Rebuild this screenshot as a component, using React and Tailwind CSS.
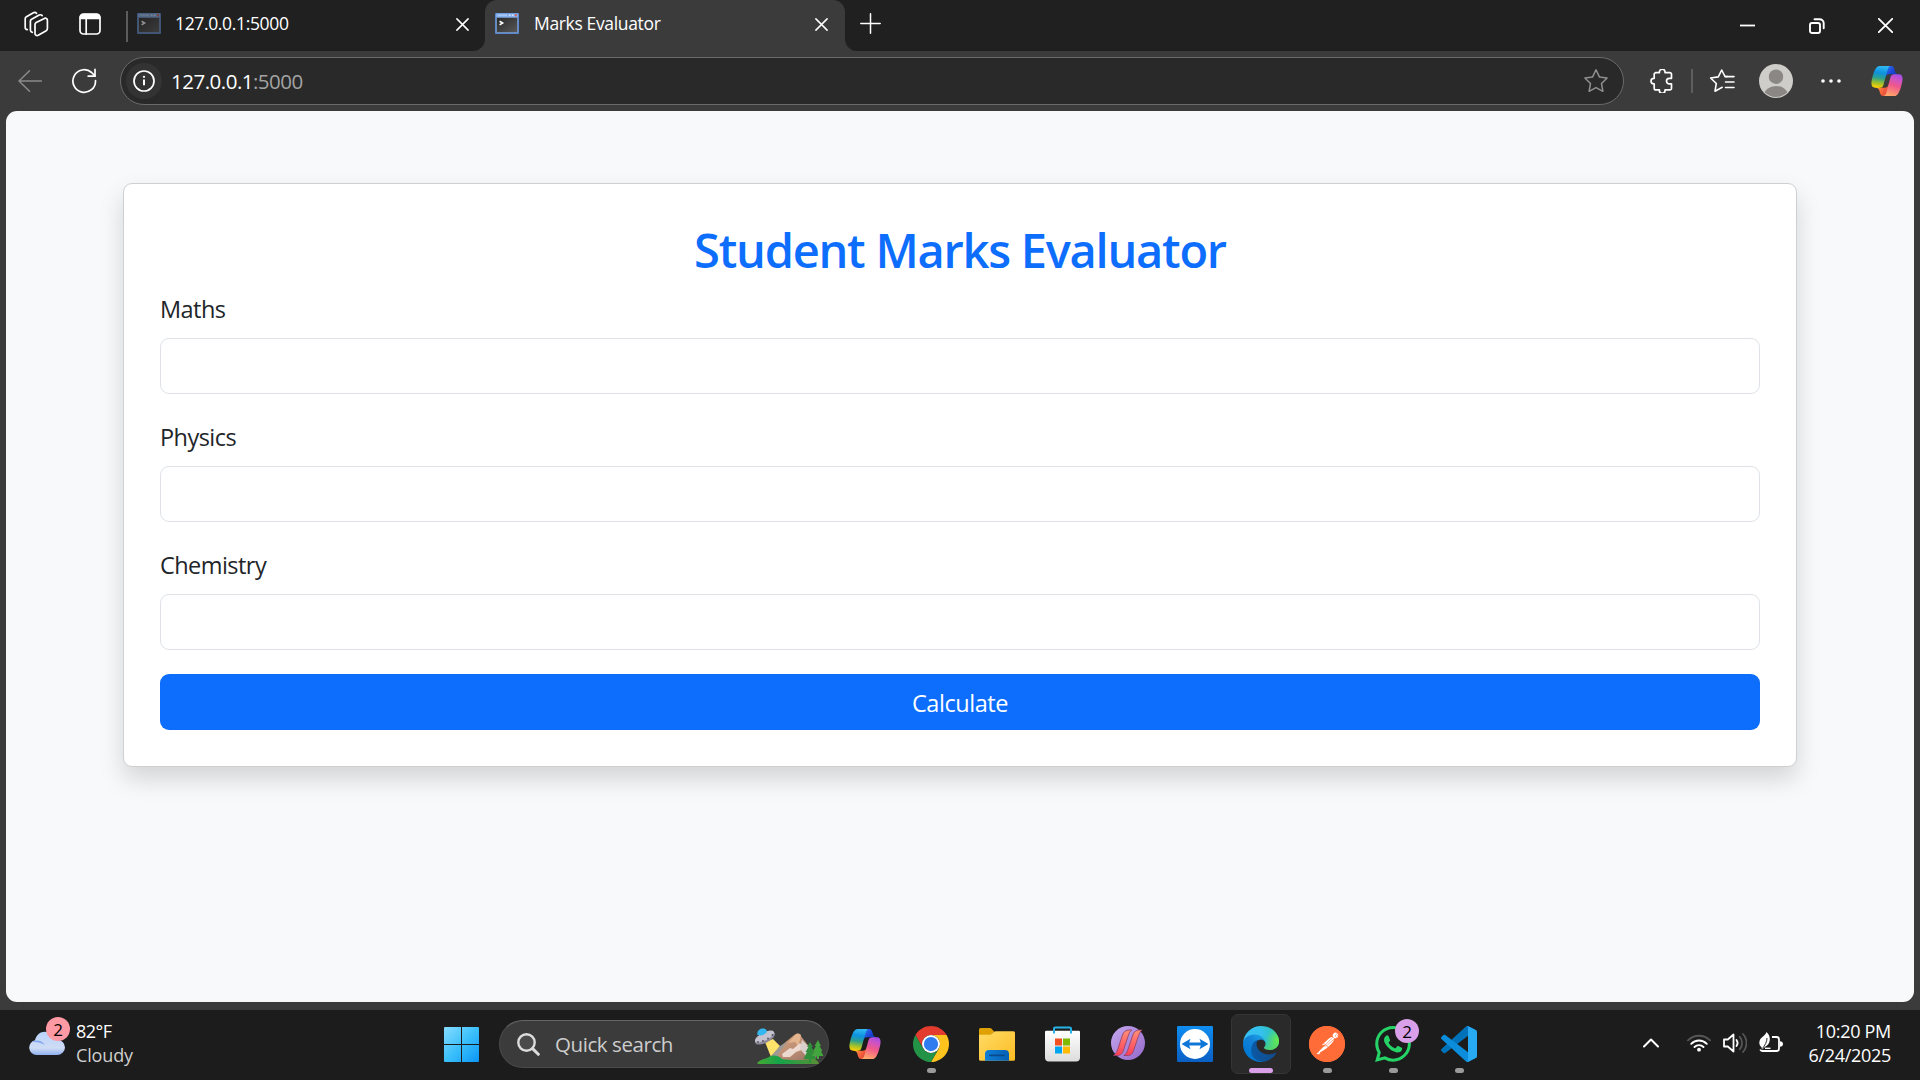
import React from "react";
import { SiPostman, SiWhatsapp } from "react-icons/si";

const SANS = "font-['Open_Sans','Noto_Sans',sans-serif]";

function Line({ w = 24, h = 24, box, sw = 1.5, className = "", children }) {
  return (
    <svg
      width={w}
      height={h}
      viewBox={box || `0 0 ${w} ${h}`}
      fill="none"
      stroke="currentColor"
      strokeWidth={sw}
      strokeLinecap="round"
      strokeLinejoin="round"
      className={`block shrink-0 ${className}`}
    >
      {children}
    </svg>
  );
}

function Copilot({ id }) {
  return (
    <svg width="34" height="30" viewBox="0 4 48 40" preserveAspectRatio="none" className="block shrink-0">
      <defs>
        <linearGradient id={`${id}a`} x1="38" y1="17" x2="25" y2="6" gradientUnits="userSpaceOnUse">
          <stop stopColor="#0a3fa8" />
          <stop offset="0.5" stopColor="#1b44d8" />
          <stop offset="1" stopColor="#2a6be8" />
        </linearGradient>
        <linearGradient id={`${id}b`} x1="10" y1="32" x2="24" y2="42" gradientUnits="userSpaceOnUse">
          <stop stopColor="#ff9a3c" />
          <stop offset="0.5" stopColor="#f8663c" />
          <stop offset="1" stopColor="#e0443c" />
        </linearGradient>
        <linearGradient id={`${id}c`} x1="15" y1="4" x2="11" y2="33" gradientUnits="userSpaceOnUse">
          <stop stopColor="#30b9f0" />
          <stop offset="0.3" stopColor="#0d91e1" />
          <stop offset="0.55" stopColor="#2ba08f" />
          <stop offset="0.78" stopColor="#9ebf2e" />
          <stop offset="1" stopColor="#ffd100" />
        </linearGradient>
        <linearGradient id={`${id}d`} x1="40" y1="14" x2="30" y2="44" gradientUnits="userSpaceOnUse">
          <stop stopColor="#a04bea" />
          <stop offset="0.25" stopColor="#c953c8" />
          <stop offset="0.55" stopColor="#f0588a" />
          <stop offset="1" stopColor="#ffa66a" />
        </linearGradient>
      </defs>
      <path fill={`url(#${id}a)`} d="M34.142 7.325A4.63 4.63 0 0 0 29.7 4h-1.35a4.63 4.63 0 0 0-4.554 3.794L21.48 20.407l.575-1.965a4.63 4.63 0 0 1 4.444-3.33h7.853l3.294 1.282 3.175-1.283h-.926a4.63 4.63 0 0 1-4.443-3.325l-1.31-4.461Z" />
      <path fill={`url(#${id}b)`} d="M14.33 40.656A4.63 4.63 0 0 0 18.779 44h2.87a4.63 4.63 0 0 0 4.629-4.51l.312-12.163-.654 2.233a4.63 4.63 0 0 1-4.443 3.329h-7.919l-2.823-1.532-3.057 1.532h.912a4.63 4.63 0 0 1 4.447 3.344l1.279 4.423Z" />
      <path fill={`url(#${id}c)`} d="M29.5 4H13.46c-4.583 0-7.332 6.057-9.165 12.113C2.123 23.29-.72 32.885 7.503 32.885h6.925a4.63 4.63 0 0 0 4.456-3.358 2077 2077 0 0 1 4.971-17.156c.843-2.843 1.544-5.284 2.621-6.805C27.08 4.714 28.086 4 29.5 4Z" />
      <path fill={`url(#${id}d)`} d="M18.498 44h16.04c4.582 0 7.331-6.058 9.165-12.115 2.171-7.177 5.013-16.775-3.208-16.775h-6.926a4.63 4.63 0 0 0-4.455 3.358 2084 2084 0 0 1-4.972 17.16c-.842 2.844-1.544 5.285-2.621 6.806-.604.852-1.61 1.566-3.023 1.566Z" />
    </svg>
  );
}

function TerminalIcon({ id, dim }) {
  return (
    <svg width="24" height="21" viewBox="0 0 24 21" className={dim ? "block shrink-0 opacity-50" : "block shrink-0"}>
      <defs>
        <linearGradient id={id} x1="0" y1="0" x2="1" y2="1">
          <stop stopColor="#2a2a2a" />
          <stop offset="1" stopColor="#575757" />
        </linearGradient>
      </defs>
      <rect width="24" height="21" rx="1" fill="#5b8ad2" />
      <rect x="1" y="0.5" width="22" height="3.5" fill="#86b1ee" />
      <path d="M3 2.2h9" stroke="#a9c9f5" strokeWidth="1.4" />
      <path d="M14 2.2h1.5M17 2.2h1.5" stroke="#dbe8fb" strokeWidth="1.4" />
      <rect x="19.8" y="1.2" width="2.2" height="2" fill="#d9675a" />
      <rect x="1.6" y="4.6" width="20.8" height="14.8" fill="#8f8f8f" />
      <rect x="2" y="5" width="20" height="14" fill={`url(#${id})`} />
      <path d="M4.6 8.2 7.6 10 4.6 11.9" fill="none" stroke="#fff" strokeWidth="1.6" />
    </svg>
  );
}

function CloseX({ size = 13 }) {
  return (
    <Line w={size} h={size} box="0 0 13 13">
      <path d="M.9.9l11.2 11.2M12.1.9.9 12.1" />
    </Line>
  );
}

function TabBar() {
  return (
    <div className="flex h-[51px] w-full shrink-0 bg-[#202020] text-white">
      <div className="flex h-[48px] w-[126px] items-center pl-[23px]">
        <Line w={26} h={26} sw={1.7}>
          <path d="M13.200 11.400 21.400 7.400c1.400-.6 3 .2 3 1.900v8.300c0 1-.4 1.700-1.200 2.100l-8 4.600c-1.500.8-3.200-.2-3.200-1.900v-9c0-1 .5-1.600 1.200-2Z" />
          <path d="M9.300 21.300c-1.200-.2-1.900-1-1.900-2.200v-8.800c0-.9.4-1.600 1.200-2l7.600-4.200c1.200-.6 2.300-.3 3 .5" />
          <path d="M4.300 18.600c-1.300-.2-2.100-1-2.100-2.200V7.700c0-.9.4-1.600 1.200-2l7-3.900c1.200-.6 2.300-.4 3.100.5" />
        </Line>
        <Line w={22} h={22} sw={1.7} className="ml-[30px]">
          <rect x="1" y="1" width="20" height="20" rx="3.5" />
          <path d="M1.500 5V4A2.500 2.500 0 0 1 4 1.500h14A2.500 2.500 0 0 1 20.500 4v1.300h-19Z" fill="currentColor" />
          <path d="M7.200 6v15" />
        </Line>
      </div>
      <div className="mt-[11px] h-[31px] w-[2px] bg-[#5c5c5c]" />
      <div className="flex h-[47px] w-[357px] items-center pl-[9px] pr-[16px]">
        <TerminalIcon id="termA" dim />
        <span className="ml-[14px] text-[17.5px] tracking-[-0.35px]">127.0.0.1:5000</span>
        <span className="ml-auto pt-[2px]">
          <CloseX />
        </span>
      </div>
      <div className="relative flex w-[360px] rounded-t-[12px] bg-[#3b3b3b]">
        <svg width="12" height="12" className="absolute bottom-0 left-[-12px]">
          <path d="M12 0v12H0A12 12 0 0 0 12 0Z" fill="#3b3b3b" />
        </svg>
        <svg width="12" height="12" className="absolute bottom-0 right-[-12px]">
          <path d="M0 0v12h12A12 12 0 0 1 0 0Z" fill="#3b3b3b" />
        </svg>
        <div className="flex h-[47px] w-full items-center pl-[10px] pr-[17px]">
          <TerminalIcon id="termB" />
          <span className="ml-[15px] text-[17.5px] tracking-[-0.35px]">Marks Evaluator</span>
          <span className="ml-auto pt-[2px]">
            <CloseX />
          </span>
        </div>
      </div>
      <Line w={21} h={21} className="ml-[15px] mt-[13px]">
        <path d="M10.500.8v19.400M.8 10.500h19.400" />
      </Line>
      <div className="ml-auto flex h-[51px] items-center pr-[27px]">
        <Line w={15} h={15} sw={1.8}>
          <path d="M0 7.500h15" strokeLinecap="butt" />
        </Line>
        <Line w={16} h={16} sw={1.9} className="ml-[54px]">
          <rect x="1" y="5" width="10" height="10" rx="2" />
          <path d="M5.500 1.200h5.200a4 4 0 0 1 4 4v5" />
        </Line>
        <Line w={15} h={15} box="0 0 15 15" sw={1.8} className="ml-[53px]">
          <path d="M.8.8l13.400 13.400M14.200.8.8 14.200" />
        </Line>
      </div>
    </div>
  );
}

function Toolbar() {
  return (
    <div className="flex h-[60px] w-full shrink-0 items-center bg-[#3b3b3b] text-white">
      <Line w={24} h={24} className="ml-[18px] mt-[-1px] text-[#8b8b8b]">
        <path d="M11.500 1.800 1 12l10.500 10.200M1 12h22.500" />
      </Line>
      <Line w={26} h={26} sw={1.7} className="ml-[29px]">
        <path d="M24.500 12.600A11.300 11.300 0 1 1 20.600 4.500L24 7.800" />
        <path d="M24 1.400v6.800h-6.800" />
      </Line>
      <div className="ml-[23px] flex h-[48px] w-[1504px] items-center rounded-full border border-[#6a6a6a] bg-[#292929] pl-[5px] pr-[14px]">
        <div className="flex h-9 w-9 items-center justify-center rounded-full bg-[#333333]">
          <Line w={22} h={22} sw={1.7}>
            <circle cx="11" cy="11" r="10" />
            <path d="M11 9.500v5.800" strokeWidth="2" strokeLinecap="butt" />
            <circle cx="11" cy="6.800" r=".5" strokeWidth="1.300" />
          </Line>
        </div>
        <span className="ml-[9px] text-[20.500px] tracking-[-0.5px]">
          127.0.0.1<span className="text-[#a3a3a3]">:5000</span>
        </span>
        <Line w={26} h={26} box="0 0 26 26" className="ml-auto text-[#8f8f8f]">
          <path d="M13 1.800l3.400 7.100 7.700 1.100-5.600 5.500 1.400 7.800L13 19.600l-6.900 3.700 1.400-7.800L1.900 10l7.700-1.100Z" />
        </Line>
      </div>
      <Line w={24} h={24} sw={1.7} className="ml-[26px]">
        <path d="M5.500 3.600h3.900V3a2.800 2.800 0 0 1 5.600 0v.6h4.800a1.700 1.700 0 0 1 1.700 1.700v4h-2.200a2.800 2.800 0 0 0 0 5.600h2.200v4.300a1.700 1.700 0 0 1-1.700 1.700H15v.6a2.800 2.800 0 0 1-5.600 0v-.6H5.900a1.700 1.700 0 0 1-1.700-1.700v-4.300H3.800a2.800 2.800 0 0 1 0-5.600h.4v-4a1.700 1.700 0 0 1 1.700-1.700" />
      </Line>
      <div className="ml-[17px] h-6 w-[2px] bg-[#5e5e5e]" />
      <Line w={26} h={26} sw={1.6} className="ml-[16px]">
        <path d="M13.200 19.300 6 23.200l1.300-7.700L1.600 10l7.700-1.100L12.700 2l3.300 6.500h2.500" />
        <path d="M16 8.600h9M16.500 14h8.500M16.500 19.500h8.500" />
      </Line>
      <svg width="34" height="34" viewBox="0 0 34 34" className="ml-[24px] block shrink-0">
        <clipPath id="avatarClip">
          <circle cx="17" cy="17" r="16" />
        </clipPath>
        <circle cx="17" cy="17" r="17" fill="#cfcdca" />
        <g clipPath="url(#avatarClip)" fill="#8b8784">
          <circle cx="17" cy="12.700" r="7.200" />
          <ellipse cx="17" cy="31" rx="12" ry="9" />
        </g>
      </svg>
      <svg width="20" height="4" viewBox="0 0 20 4" className="ml-[28px] block shrink-0" fill="#fff">
        <circle cx="2" cy="2" r="1.8" />
        <circle cx="10" cy="2" r="1.8" />
        <circle cx="18" cy="2" r="1.8" />
      </svg>
      <div className="ml-[29px]">
        <Copilot id="cpTop" />
      </div>
    </div>
  );
}

function Field({ label }) {
  return (
    <div className="mb-6 flex flex-col">
      <label className="mb-[11px] pt-px text-[23.500px] leading-[36px] tracking-[-0.55px] text-[#212529]">{label}</label>
      <div className="h-[56px] rounded-[9px] border border-[#dee2e6] bg-white" />
    </div>
  );
}

function Page() {
  return (
    <div className="flex min-h-0 flex-1 bg-[#3b3b3b] px-[6px] pb-[8px]">
      <div className="flex-1 rounded-[11px] bg-[#f8f9fa] px-[117px] pt-[72px]">
        <div className="h-[584px] rounded-[9px] border border-[#cfd0d1] bg-white p-[36px] shadow-[0_12px_24px_rgba(0,0,0,0.15)]">
          <h2 className="mb-[11px] pt-px text-center text-[47px] font-semibold leading-[58px] tracking-[-1.25px] text-[#0d6efd]">
            Student Marks Evaluator
          </h2>
          <Field label="Maths" />
          <Field label="Physics" />
          <Field label="Chemistry" />
          <button className="flex h-[56px] w-full items-center justify-center rounded-[9px] bg-[#0d6efd] pt-[4px] text-[23.500px] tracking-[-0.45px] text-white">
            Calculate
          </button>
        </div>
      </div>
    </div>
  );
}

function SearchArt() {
  return (
    <svg width="70" height="37" viewBox="0 0 70 37" className="block shrink-0">
      <defs>
        <linearGradient id="mtn" x1="0" y1="0" x2="1" y2="1">
          <stop stopColor="#d9a982" />
          <stop offset="0.6" stopColor="#b98a72" />
          <stop offset="1" stopColor="#8b6b62" />
        </linearGradient>
        <linearGradient id="grass" x1="0" y1="0" x2="1" y2="0">
          <stop stopColor="#46a832" />
          <stop offset="0.35" stopColor="#16a34a" />
          <stop offset="1" stopColor="#5a8f35" />
        </linearGradient>
      </defs>
      <path d="M11 14 19 11l7 7-9 11Z" fill="#ffe36b" />
      <path d="M12 33 28 17l11-9c2-2 5-3 7-1l17 22-8 6H16Z" fill="url(#mtn)" />
      <path d="m13 33 13-15 7-4-8 11-5 10Z" fill="#9c9a97" />
      <path d="m42 6-8 9 7-1 3 4 2-6 1-5c-1-1-3-2-5-1Z" fill="#e3b48e" />
      <path d="m28 26 8-6 3 1 7-6 4 6-8 3-6 5-7 0Z" fill="#ecd9d0" />
      <path d="m48 12 6 6 5 12-6-1-7-8Z" fill="#d9d0ce" />
      <path d="M4 34c4-3 8-3 11-5 5-3 10-1 13 2 8 1 18 2 28 0 5-1 8 1 9 5H5c-2 0-2-1-1-2Z" fill="url(#grass)" />
      <path d="m56 14-3 5h1.500l-3 5H53l-3.500 7h5.500v4h2v-4h5.500L59 24h1.500l-3-5H59Z" fill="#2f8f3a" />
      <path d="m64 12-3.500 6H62l-3 5h1.500l-2.500 5h5v3h2v-3h4.500l-2.500-5h1.500l-3-5h1.500Z" fill="#43a53e" />
      <ellipse cx="11" cy="10" rx="11" ry="4.800" transform="rotate(-27 11 10)" fill="#8e8a9b" />
      <ellipse cx="10.500" cy="8.500" rx="10.500" ry="4" transform="rotate(-27 10.500 8.500)" fill="#c5c2cf" />
      <path d="M3.500 7C2.500 3 6 .3 9.500.6c2 .2 3.500 1.400 3.500 3.200-2 3-5.500 4.500-9.500 3.200Z" fill="#35b6ee" />
      <g fill="#5d596b">
        <circle cx="4" cy="14" r="1" />
        <circle cx="9" cy="13" r="1" />
        <circle cx="14" cy="10.500" r="1" />
        <circle cx="18.500" cy="7" r="1" />
      </g>
    </svg>
  );
}

function Chrome() {
  return (
    <svg width="36" height="36" viewBox="0 0 48 48">
      <path d="M24 12H44.780A24 24 0 0 0 3.220 12L13.600 30A12 12 0 0 1 24 12Z" fill="#e33b2e" />
      <path d="M34.390 30 24 48A24 24 0 0 0 44.780 12H24A12 12 0 0 1 34.390 30Z" fill="#fcc31e" />
      <path d="M13.600 30 3.220 12A24 24 0 0 0 24 48L34.390 30A12 12 0 0 1 13.600 30Z" fill="#239447" />
      <circle cx="24" cy="24" r="12" fill="#fff" />
      <circle cx="24" cy="24" r="9.500" fill="#2f7bf0" />
    </svg>
  );
}

function Explorer() {
  return (
    <svg width="36" height="33" viewBox="0 0 36 33">
      <defs>
        <linearGradient id="fold" x1="0" y1="0" x2="1" y2="1">
          <stop stopColor="#ffdb67" />
          <stop offset="1" stopColor="#fcbd22" />
        </linearGradient>
        <linearGradient id="foldBlue" x1="0" y1="0" x2="1" y2="0">
          <stop stopColor="#0f7fd8" />
          <stop offset="1" stopColor="#0560b4" />
        </linearGradient>
      </defs>
      <path d="M0 1.500A1.500 1.500 0 0 1 1.500 0h9.300c.8 0 1.500.3 2 .9L15.500 4 10 8H0Z" fill="#e0a106" />
      <path d="M0 6.800h10.500c1 0 1.700-.3 2.300-1L15 4c.5-.6 1-.8 1.800-.8h17.700A1.500 1.500 0 0 1 36 4.700v26.500a1.500 1.500 0 0 1-1.500 1.500h-33A1.500 1.500 0 0 1 0 31.200Z" fill="url(#fold)" />
      <path d="M6 32.700V26a4 4 0 0 1 4-4h16a4 4 0 0 1 4 4v6.700Z" fill="url(#foldBlue)" />
      <path d="M11 27.300h14" stroke="#0b4a8a" strokeWidth="1.800" strokeLinecap="round" />
    </svg>
  );
}

function Store() {
  return (
    <svg width="36" height="36" viewBox="0.5 0 36 36">
      <defs>
        <linearGradient id="bag" x1="0" y1="0" x2="0" y2="1">
          <stop stopColor="#ffffff" />
          <stop offset="1" stopColor="#dcdcdc" />
        </linearGradient>
      </defs>
      <path d="M.5 6A1.200 1.200 0 0 1 1.700 4.800h32.600A1.200 1.200 0 0 1 35.500 6v25.500a4 4 0 0 1-4 4h-27a4 4 0 0 1-4-4Z" fill="url(#bag)" />
      <path d="M9.500 7.500V2.700c0-.8.500-1.300 1.300-1.300h14.400c.8 0 1.300.5 1.300 1.300v4.800" fill="none" stroke="#27b3e6" strokeWidth="2" />
      <path fill="#f25022" d="M10.500 12.500h7v7h-7z" />
      <path fill="#7fba00" d="M18.500 12.500h7v7h-7z" />
      <path fill="#00a4ef" d="M10.500 20.500h7v7h-7z" />
      <path fill="#ffb900" d="M18.500 20.500h7v7h-7z" />
    </svg>
  );
}

function Slashes() {
  return (
    <svg width="34" height="34" viewBox="0 0 34 34" className="mr-[2px] mt-[-2px]">
      <defs>
        <linearGradient id="orb" x1="0" y1="0" x2="1" y2="1">
          <stop stopColor="#c6a8ef" />
          <stop offset="1" stopColor="#9468c8" />
        </linearGradient>
        <linearGradient id="slash" x1="0" y1="0" x2="0" y2="1">
          <stop stopColor="#ff8f78" />
          <stop offset="1" stopColor="#ff4058" />
        </linearGradient>
      </defs>
      <circle cx="17" cy="17" r="17" fill="url(#orb)" />
      <g fill="url(#slash)" stroke="#8d3d66" strokeWidth=".8">
        <path d="M2.500 29.500C5 28 6 25.500 7 22.500L11.500 9c1.200-3.500 3.500-5 7-5h2.300c-2 1.300-2.700 3.300-3.400 5.500L12.500 24c-1.300 4-3 5.500-6.500 5.500Z" />
        <path d="M12.800 29.500c2.500-1.500 3.500-4 4.500-7L21.800 9c1.200-3.500 3.500-5 7-5h2.300c-2 1.300-2.700 3.300-3.400 5.500L22.800 24c-1.300 4-3 5.500-6.500 5.500Z" />
      </g>
    </svg>
  );
}

function TeamViewer() {
  return (
    <svg width="36" height="36" viewBox="0 0 36 36">
      <defs>
        <linearGradient id="tv" x1="0" y1="0" x2="0" y2="1">
          <stop stopColor="#0f8df0" />
          <stop offset="1" stopColor="#0a5fc4" />
        </linearGradient>
      </defs>
      <rect width="36" height="36" rx="1" fill="url(#tv)" />
      <circle cx="18" cy="18" r="15" fill="#fff" />
      <path d="m4.500 18 9-5.200-1.300 3.600h11.600l-1.300-3.600 9 5.200-9 5.200 1.300-3.600H12.200l1.300 3.600Z" fill="#0d76d8" />
    </svg>
  );
}

function EdgeLogo() {
  return (
    <svg width="36" height="36" viewBox="0 0 256 256">
      <defs>
        <linearGradient id="e1" x1="63" y1="177" x2="242" y2="177" gradientUnits="userSpaceOnUse">
          <stop stopColor="#0c59a4" />
          <stop offset="1" stopColor="#114a8b" />
        </linearGradient>
        <linearGradient id="e2" x1="155" y1="100" x2="46" y2="222" gradientUnits="userSpaceOnUse">
          <stop stopColor="#1b9de2" />
          <stop offset="0.4" stopColor="#1382d8" />
          <stop offset="1" stopColor="#0078d4" />
        </linearGradient>
        <radialGradient id="e3" cx="0" cy="0" r="1" gradientUnits="userSpaceOnUse" gradientTransform="translate(26 47) rotate(92) scale(203 432)">
          <stop stopColor="#35c1f1" />
          <stop offset="0.25" stopColor="#34c1ed" />
          <stop offset="0.45" stopColor="#2fc2bd" />
          <stop offset="0.7" stopColor="#4fd36a" />
          <stop offset="1" stopColor="#66eb4b" />
        </radialGradient>
        <radialGradient id="e4" cx="250" cy="100" r="90" gradientUnits="userSpaceOnUse">
          <stop stopColor="#66eb4b" />
          <stop offset="1" stopColor="#66eb4b" stopOpacity="0" />
        </radialGradient>
      </defs>
      <path fill="url(#e2)" d="M105.730 241.420A79.200 79.200 0 0 1 83 220.080a80.720 80.720 0 0 1 29.480-120.040c3.120-1.470 8.450-4.130 15.540-4a32.350 32.350 0 0 1 25.690 13 31.880 31.880 0 0 1 6.360 18.660c0-.2 24.460-79.600-80-79.600C36.170 48.100 0 89.770 0 126.310c0 21.200 4.900 42.300 12.300 56.500a128 128 0 0 0 156.400 66.600 75.600 75.600 0 0 1-62.970-7.990Z" />
      <path fill="url(#e1)" d="M231.070 190.540c-3.450 1.800-6.960 3.450-10.600 4.830a101.500 101.500 0 0 1-35.890 6.460c-47.310 0-88.520-32.540-88.520-74.310 0-11.400 6.430-21.920 16.420-27.480-42.800 1.800-53.800 46.400-53.800 72.530 0 73.870 68.100 81.370 82.760 81.370 7.920 0 19.840-2.300 27-4.560l1.300-.44a128.200 128.200 0 0 0 66.600-52.800 4 4 0 0 0-5.270-5.600Z" />
      {["url(#e3)", "url(#e4)"].map((fill) => (
        <path key={fill} fill={fill} d="M152.330 148.860c-.81 1.050-3.300 2.500-3.300 5.660 0 2.610 1.700 5.120 4.720 7.230 14.380 10 41.490 8.680 41.560 8.680a59.560 59.560 0 0 0 30.270-8.350 61.380 61.380 0 0 0 30.430-52.880c.26-22.410-8-37.310-11.340-43.910C223.460 23.840 177.720 0 128 0A128 128 0 0 0 0 126.200c.48-36.540 36.800-66.050 80-66.050 3.500 0 23.460.34 42 10.070 16.340 8.580 24.900 18.940 30.850 29.210 6.180 10.670 7.280 24.150 7.280 29.520 0 5.370-2.740 13.330-7.800 19.910Z" />
      ))}
    </svg>
  );
}

function Postman() {
  return (
    <span className="flex h-9 w-9 items-center justify-center rounded-full bg-[radial-gradient(circle,#fff_60%,#ff6c37_62%)]">
      <SiPostman size={36} color="#ff6c37" />
    </span>
  );
}

function VSCode() {
  return (
    <svg width="36" height="36" viewBox="0 0 100 100">
      <path fill="#0072ba" d="M96.461 10.796 75.857.876C73.472-.273 70.622.212 68.750 2.083L1.299 63.583c-1.815 1.654-1.813 4.511.004 6.162l5.510 5.009c1.485 1.350 3.722 1.450 5.321.237L93.361 13.370C96.086 11.303 100 13.246 100 16.667v-.24c0-2.400-1.375-4.589-3.539-5.631Z" />
      <path fill="#0b8ddb" d="M96.461 89.204 75.857 99.125c-2.385 1.148-5.235.663-7.107-1.208L1.299 36.417c-1.815-1.654-1.813-4.511.004-6.162l5.510-5.009c1.485-1.350 3.722-1.450 5.321-.237l81.227 61.621C96.086 88.697 100 86.754 100 83.333v.24c0 2.400-1.375 4.589-3.539 5.631Z" />
      <path fill="#27a9f3" d="M75.858 99.126c-2.386 1.148-5.236.662-7.108-1.209 2.306 2.306 6.250.673 6.250-2.589V4.672c0-3.262-3.944-4.895-6.250-2.589C70.622.211 73.472-.274 75.858.874l20.601 9.907C98.623 11.822 100 14.011 100 16.413v67.174c0 2.402-1.377 4.592-3.541 5.633Z" />
    </svg>
  );
}

function Badge({ className }) {
  return (
    <span className={`absolute flex h-6 w-6 items-center justify-center rounded-full text-[17px] leading-none text-black ${className}`}>
      2
    </span>
  );
}

function TaskItem({ children, running, active }) {
  return (
    <div className="flex h-[70px] w-[66px] shrink-0 items-center justify-center pb-[2px]">
      <div
        className={
          active
            ? "relative flex h-[60px] w-[60px] items-center justify-center rounded-[7px] border border-[#353535] bg-[#2a2a2a]"
            : "relative flex h-[60px] w-[60px] items-center justify-center"
        }
      >
        {children}
        {running && <span className="absolute bottom-[1px] h-[5px] w-[9px] rounded-full bg-[#9a9a9a]" />}
        {active && <span className="absolute bottom-0 h-[5px] w-6 rounded-full bg-[#d99fe8]" />}
      </div>
    </div>
  );
}

function Taskbar() {
  return (
    <div className="flex h-[70px] w-full shrink-0 items-center bg-[#1c1c1c] text-white">
      <div className="flex w-[444px] items-start pb-[4px]">
        <div className="relative ml-[29px] h-9 w-9 pt-[12px]">
          <svg width="36" height="24" viewBox="0 0 36 24" className="block">
            <defs>
              <linearGradient id="cloud" x1="0" y1="0" x2="0" y2="1">
                <stop stopColor="#b9d3fb" />
                <stop offset="0.7" stopColor="#cfdcf5" />
                <stop offset="1" stopColor="#8fb0ee" />
              </linearGradient>
            </defs>
            <path d="M7.500 24A7.500 7.500 0 0 1 6 9.200C7.300 4 11 .8 16 .8c5.500 0 9.500 3.400 10.700 8H28a8 7.600 0 0 1 0 15.200Z" fill="url(#cloud)" />
            <path d="M3 10.500c5-2 10-.8 13 3.500-4-2.500-8-3-13-3.500Z" fill="#7fa6ec" />
          </svg>
          <Badge className="left-[17px] top-[-2px] bg-[#ff99a4]" />
        </div>
        <div className="ml-[11px] flex flex-col text-[18px] leading-6 tracking-[-0.15px]">
          <span className="tracking-[-0.500px]">82°F</span>
          <span className="text-[#cfcfcf]">Cloudy</span>
        </div>
      </div>
      <svg width="35" height="35" viewBox="0 0 35 35" className="mt-[-1px] block shrink-0">
        <defs>
          <linearGradient id="win" x1="0" y1="0" x2="35" y2="35" gradientUnits="userSpaceOnUse">
            <stop stopColor="#86dcff" />
            <stop offset="0.5" stopColor="#3cc0fb" />
            <stop offset="1" stopColor="#0a95f5" />
          </linearGradient>
        </defs>
        <path d="M1 0h16v17H0V1a1 1 0 0 1 1-1ZM18 0h16a1 1 0 0 1 1 1v16H18ZM0 18h17v17H1a1 1 0 0 1-1-1ZM18 18h17v16a1 1 0 0 1-1 1H18Z" fill="url(#win)" />
      </svg>
      <div className="ml-[20px] mt-[-2px] flex h-[48px] w-[330px] shrink-0 items-center rounded-full border border-[#4a4a4a] border-t-[#666] bg-[#3b3b3b] pl-[17px] pr-[4px]">
        <Line w={23} h={23} sw={2.4} className="text-[#dcdcdc]">
          <circle cx="9.500" cy="9.500" r="8.200" fill="#4a4a4a" />
          <path d="m15.600 15.600 5.700 5.700" strokeWidth="3" />
        </Line>
        <span className="ml-[15px] pt-[1px] text-[20.500px] tracking-[-0.42px] text-[#cdcdcd]">Quick search</span>
        <span className="ml-auto pt-[4px]">
          <SearchArt />
        </span>
      </div>
      <div className="ml-[3px] flex">
        <TaskItem><Copilot id="cpTask" /></TaskItem>
        <TaskItem running><Chrome /></TaskItem>
        <TaskItem><Explorer /></TaskItem>
        <TaskItem><Store /></TaskItem>
        <TaskItem><Slashes /></TaskItem>
        <TaskItem><TeamViewer /></TaskItem>
        <TaskItem active><EdgeLogo /></TaskItem>
        <TaskItem running><Postman /></TaskItem>
        <TaskItem running>
          <SiWhatsapp size={36} color="#25d366" />
          <Badge className="right-[4px] top-[5px] bg-[#d99fe8]" />
        </TaskItem>
        <TaskItem running><VSCode /></TaskItem>
      </div>
      <div className="ml-auto flex items-center pb-[4px] pr-[29px]">
        <Line w={16} h={10} sw={2}>
          <path d="m1 8.500 7-7 7 7" />
        </Line>
        <svg width="24" height="18" viewBox="0 0 24 18" fill="none" strokeWidth="1.900" strokeLinecap="round" className="ml-[28px] block">
          <path d="M1 6.300a15.500 15.500 0 0 1 22 0" stroke="#565656" />
          <path d="M4.200 9.800a11 11 0 0 1 15.600 0M7.500 13a6.400 6.400 0 0 1 9 0" stroke="#fff" />
          <circle cx="12" cy="15.700" r="1.900" fill="#fff" />
        </svg>
        <svg width="24" height="20" viewBox="0 0 24 20" fill="none" strokeWidth="1.800" strokeLinecap="round" strokeLinejoin="round" className="ml-[12px] block">
          <path d="M1 6.500h3.800L10.500 1.500v17L4.800 13.500H1ZM13.500 7a5 5 0 0 1 0 6" stroke="#fff" />
          <path d="M16.800 3.800a9.500 9.500 0 0 1 0 12.400M20 1a13.500 13.500 0 0 1 0 18" stroke="#565656" />
        </svg>
        <svg width="24" height="20" viewBox="0 0 24 20" className="ml-[12px] mt-[-2px] block">
          <path d="M13 5h4.500A2.500 2.500 0 0 1 20 7.500v9a2.500 2.500 0 0 1-2.500 2.500h-14C2 19 1.500 18.300 1.200 17.500" fill="none" stroke="#fff" strokeWidth="1.800" />
          <path d="M21 9.200c1.800 0 3 1.200 3 2.800s-1.200 2.800-3 2.800Z" fill="#fff" />
          <path d="M7.500 0c2.300 2 3.700 5 3.200 8.500-.4 3-2 5-4.200 6L3 17.500l-.5-2.300C.3 13.500-.3 10.500 1 7.800 2.300 5.200 6.500 3.500 7.500 0Z" fill="#fff" />
          <path d="M8 6c0 4-2 7-4.500 10.500" fill="none" stroke="#1c1c1c" strokeWidth=".9" />
          <path d="M6 16.300h5.500" stroke="#fff" strokeWidth="1.400" />
        </svg>
        <div className="ml-[18px] flex w-[90px] flex-col text-right text-[18px] leading-6 tracking-[-0.300px]">
          <span>10:20 PM</span>
          <span>6/24/2025</span>
        </div>
      </div>
    </div>
  );
}

export default function App() {
  return (
    <div className={`flex h-[1080px] w-[1920px] flex-col overflow-hidden ${SANS}`}>
      <TabBar />
      <Toolbar />
      <Page />
      <Taskbar />
    </div>
  );
}
